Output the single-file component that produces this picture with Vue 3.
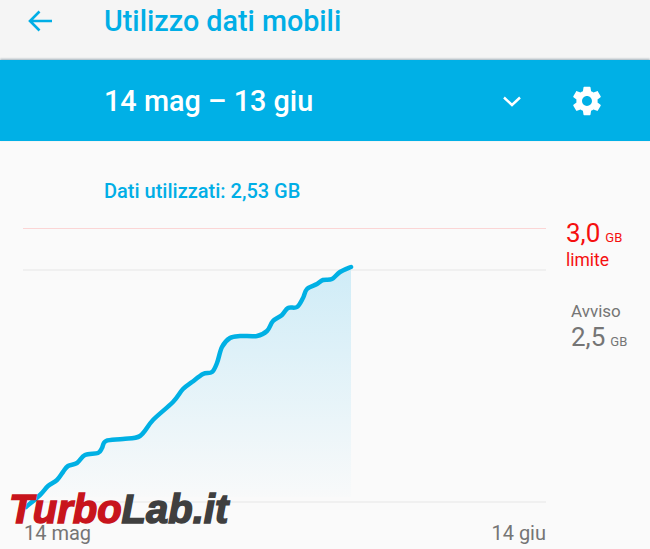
<template>
  <div class="screen">
    <header class="toolbar">
      <svg class="back" width="28" height="28" viewBox="0 0 28 28">
        <path d="M26 14H4M13.500 4.500 4 14l9.500 9.500" fill="none" stroke="#00aee6" stroke-width="2.600" />
      </svg>
      <h1 class="title">Utilizzo dati mobili</h1>
    </header>

    <section class="cycle">
      <span class="range">14 mag – 13 giu</span>
      <svg class="chevron" width="20" height="12" viewBox="0 0 20 12">
        <path d="M2 2.500 10 10l8-7.500" fill="none" stroke="#fff" stroke-width="2.400" />
      </svg>
      <svg class="gear" width="34" height="34" viewBox="0 0 24 24">
        <path fill="#fff" d="M19.430 12.980c.04-.32.070-.64.070-.98s-.03-.66-.07-.98l2.110-1.650c.19-.15.240-.42.120-.64l-2-3.460c-.12-.22-.39-.3-.61-.22l-2.490 1c-.52-.4-1.080-.73-1.690-.98l-.38-2.650A.488.488 0 0 0 14 2h-4c-.25 0-.46.180-.49.420l-.38 2.650c-.61.250-1.170.59-1.690.98l-2.490-1c-.23-.09-.49 0-.61.220l-2 3.460c-.13.220-.07.490.12.640l2.110 1.650c-.04.320-.07.650-.07.980s.03.660.07.980l-2.110 1.650c-.19.150-.24.420-.12.640l2 3.460c.12.220.39.300.61.220l2.490-1c.52.400 1.080.730 1.690.980l.38 2.650c.03.240.24.420.49.420h4c.25 0 .46-.18.49-.42l.38-2.650c.61-.25 1.170-.59 1.690-.98l2.490 1c.23.090.49 0 .61-.22l2-3.460c.12-.22.07-.49-.12-.64l-2.110-1.650zM12 15.500c-1.930 0-3.500-1.570-3.500-3.500s1.570-3.500 3.500-3.500 3.500 1.570 3.500 3.500-1.570 3.500-3.500 3.500z" />
      </svg>
    </section>

    <main class="usage">
      <p class="used">Dati utilizzati: 2,53 GB</p>

      <div class="chart-row">
        <svg class="chart" width="546" height="290" viewBox="0 220 546 290">
          <defs>
            <linearGradient id="area" x1="0" y1="0" x2="0" y2="1">
              <stop offset="0" stop-color="#cfecf7" />
              <stop offset="1" stop-color="#cfecf7" stop-opacity="0" />
            </linearGradient>
          </defs>
          <line x1="23" x2="546" y1="228.500" y2="228.500" stroke="#fbd5d5" />
          <line x1="23" x2="546" y1="270" y2="270" stroke="#ececec" stroke-width="1.500" />
          <line x1="23" x2="546" y1="502" y2="502" stroke="#ececec" stroke-width="1.500" />
          <path :d="areaPath" fill="url(#area)" />
          <path :d="linePath" fill="none" stroke="#00b0e4" stroke-width="4.500" stroke-linecap="round" />
        </svg>

        <aside class="limits">
          <div class="limit">
            <div class="amount">3,0<small>GB</small></div>
            <div class="limit-label">limite</div>
          </div>
          <div class="warning">
            <div class="warning-label">Avviso</div>
            <div class="amount">2,5<small>GB</small></div>
          </div>
        </aside>
      </div>

      <div class="axis">
        <span>14 mag</span>
        <span>14 giu</span>
      </div>
    </main>

    <div class="watermark"><span class="turbo">Turbo</span><span class="lab">Lab.it</span></div>
  </div>
</template>

<script setup>
const points = [
  [26, 507], [40, 495], [48, 486], [57, 480], [63, 472], [68, 466], [77, 463], [85, 455],
  [98, 453], [102, 448], [106, 441], [123, 439], [140, 436], [153, 420],
  [173, 402], [183, 389], [192, 382], [203, 374], [212, 372], [217, 363],
  [222, 347], [230, 338], [240, 336], [257, 336], [267, 331], [273, 321], [282, 315], [288, 308],
  [297, 307], [303, 298], [307, 289], [317, 284], [323, 280], [332, 279], [340, 272],
  [351, 267],
];

// catmull-rom a bezier, la curva resta morbida
function smooth(pts) {
  let d = `M${pts[0][0]} ${pts[0][1]}`;
  for (let i = 0; i < pts.length - 1; i++) {
    const p0 = pts[i - 1] || pts[i];
    const p1 = pts[i];
    const p2 = pts[i + 1];
    const p3 = pts[i + 2] || p2;
    const c1x = p1[0] + (p2[0] - p0[0]) / 6;
    const c1y = p1[1] + (p2[1] - p0[1]) / 6;
    const c2x = p2[0] - (p3[0] - p1[0]) / 6;
    const c2y = p2[1] - (p3[1] - p1[1]) / 6;
    d += `C${c1x} ${c1y} ${c2x} ${c2y} ${p2[0]} ${p2[1]}`;
  }
  return d;
}

const linePath = smooth(points);
const areaPath = `${linePath}L351 497L26 497Z`;
</script>

<style>
html,
body {
  margin: 0;
  background: #fafafa;
}
</style>

<style scoped>
.screen {
  position: relative;
  width: 650px;
  height: 549px;
  overflow: hidden;
  background: #fafafa;
  font-family: Roboto, "Noto Sans", sans-serif;
}

.toolbar {
  display: flex;
  align-items: center;
  height: 60px;
  padding: 0 0 18px 26px;
  box-sizing: border-box;
  background: #f5f5f5;
}

.back {
  margin-right: 50px;
}

.title {
  margin: 0;
  font-size: 28.700px;
  font-weight: 500;
  color: #00aee6;
}

.cycle {
  display: flex;
  align-items: center;
  height: 81px;
  padding: 0 46px 0 104px;
  box-sizing: border-box;
  background: #00b0e6;
  box-shadow: 0 -1px 2px rgba(60, 90, 110, 0.45);
}

.range {
  flex: 1;
  padding-top: 1px;
  font-size: 28.800px;
  font-weight: 500;
  color: #fff;
}

.chevron {
  margin-right: 48px;
}

.used {
  margin: 0;
  padding: 40px 0 0 104px;
  height: 39px;
  line-height: 20px;
  font-size: 20px;
  font-weight: 500;
  color: #00aee6;
}

.chart-row {
  display: flex;
}

.chart {
  display: block;
  flex: none;
}

.limits {
  padding: 0 0 0 20px;
}

.amount {
  font-size: 26px;
  line-height: 26px;
}

.amount small {
  margin-left: 5px;
  font-size: 13px;
}

.limit {
  color: #f50f0f;
}

.limit-label {
  margin-top: -1px;
  font-size: 17.500px;
  line-height: 20px;
}

.warning {
  margin-top: 31px;
  padding-left: 5px;
  color: #757575;
}

.warning-label {
  font-size: 17px;
  line-height: 20px;
  margin-bottom: 3px;
}

.axis {
  display: flex;
  justify-content: space-between;
  width: 522px;
  padding: 11px 0 0 24px;
  font-size: 20px;
  color: #757575;
}

.watermark {
  position: absolute;
  left: 9px;
  top: 486px;
  font-family: "Liberation Sans", Arial, sans-serif;
  font-size: 40px;
  line-height: 46px;
  font-weight: 700;
  font-style: italic;
  white-space: nowrap;
}

.turbo {
  color: #c8141c;
  -webkit-text-stroke: 1.500px #c8141c;
}

.lab {
  color: #3f3f3f;
  -webkit-text-stroke: 1.500px #3f3f3f;
}
</style>
